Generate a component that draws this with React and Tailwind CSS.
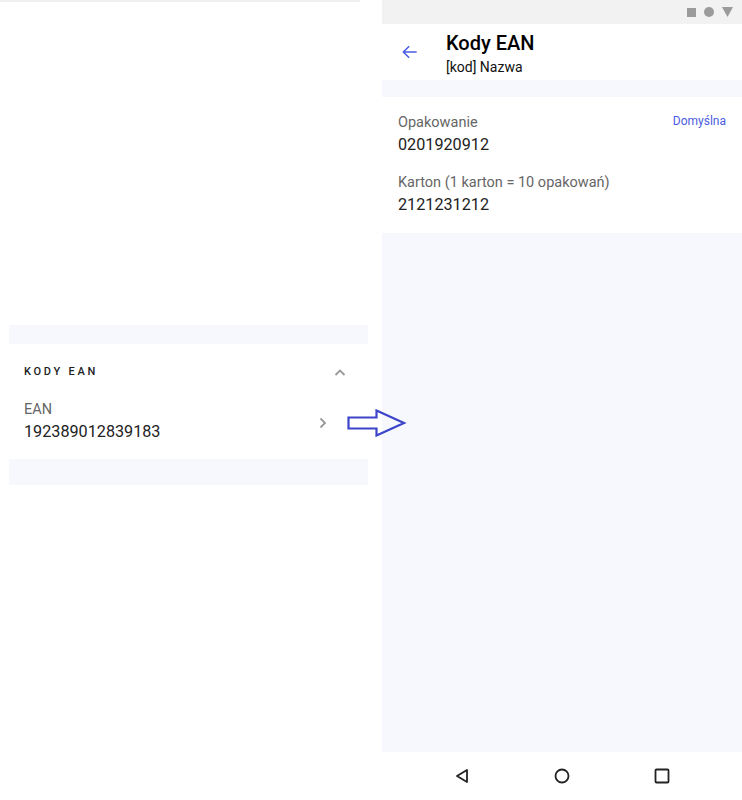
import React from "react";

const font = { fontFamily: "Roboto, 'Liberation Sans', sans-serif" };

const BlockArrow = () => (
  <svg width="60" height="28" viewBox="0 0 60 28" className="absolute left-[347px] top-[409px]">
    <path d="M1.5 8.5 H29.5 V1.5 L57 14 L29.5 26.5 V19.5 H1.5 Z" fill="none" stroke="#3c44c9" strokeWidth="2.2" />
  </svg>
);

const LeftPanel = () => (
  <div className="w-[382px] shrink-0 flex flex-col">
    <div className="h-[2px] w-[360px] bg-[#f0f0f0]" />
    <div className="h-[323px]" />
    <div className="ml-[9px] w-[359px] h-[19px] bg-[#f7f8fd]" />
    <div className="ml-[9px] w-[359px] h-[115px] bg-white flex flex-col">
      <div className="h-[56px] px-[15px] pt-[1px] flex items-center justify-between">
        <span className="text-[11px] font-medium tracking-[0.25em] text-[#222]">KODY EAN</span>
        <svg width="14" height="14" viewBox="0 0 14 14" className="mr-[6px]">
          <path d="M2.5 9 L7 4.5 L11.5 9" fill="none" stroke="#999" strokeWidth="1.8" />
        </svg>
      </div>
      <div className="px-[15px] pt-[1px] flex items-center justify-between">
        <div className="flex flex-col">
          <span className="text-[14.5px] leading-[18px] text-[#666]">EAN</span>
          <span className="text-[16.2px] leading-[22px] text-[#222] mt-[2px]">192389012839183</span>
        </div>
        <svg width="12" height="14" viewBox="0 0 12 14" className="mr-[24px] mt-[2px]">
          <path d="M3.5 2.5 L8 7 L3.5 11.5" fill="none" stroke="#999" strokeWidth="1.8" />
        </svg>
      </div>
    </div>
    <div className="ml-[9px] w-[359px] h-[26px] bg-[#f7f8fd]" />
  </div>
);

const RightPanel = () => (
  <div className="w-[360px] shrink-0 h-[800px] flex flex-col bg-[#f7f8fd]">
    <div className="h-[24px] bg-[#f2f2f2] flex items-center justify-end gap-[8px] pr-[9px]">
      <div className="w-[9px] h-[9px] bg-[#9b9b9b]" />
      <div className="w-[10px] h-[10px] rounded-full bg-[#9b9b9b]" />
      <svg width="11" height="10" viewBox="0 0 11 10">
        <path d="M0 0 H11 L5.5 10 Z" fill="#9b9b9b" />
      </svg>
    </div>
    <div className="h-[56px] bg-white flex items-center">
      <div className="w-[64px] flex items-center pl-[18px]">
        <svg width="20" height="20" viewBox="0 0 24 24">
          <path d="M20 12 H4.5 M11 5 L4 12 L11 19" fill="none" stroke="#4a5be0" strokeWidth="1.8" />
        </svg>
      </div>
      <div className="flex flex-col pt-[3px]">
        <span className="text-[20px] leading-[24px] font-medium text-black">Kody EAN</span>
        <span className="text-[14px] leading-[18px] text-[#111] mt-[3px]">[kod] Nazwa</span>
      </div>
    </div>
    <div className="h-[17px]" />
    <div className="h-[136px] bg-white px-[16px] pt-[17px] flex flex-col">
      <div className="flex justify-between items-start">
        <div className="flex flex-col">
          <span className="text-[14.5px] leading-[18px] text-[#666]">Opakowanie</span>
          <span className="text-[16.2px] leading-[22px] text-[#222] mt-[2px]">0201920912</span>
        </div>
        <span className="text-[12px] leading-[14px] text-[#4a5be0]">Domyślna</span>
      </div>
      <div className="flex flex-col mt-[18px]">
        <span className="text-[14.5px] leading-[18px] text-[#666]">Karton (1 karton = 10 opakowań)</span>
        <span className="text-[16.2px] leading-[22px] text-[#222] mt-[2px]">2121231212</span>
      </div>
    </div>
    <div className="flex-1" />
    <div className="h-[48px] bg-white flex items-center justify-between pl-[72px] pr-[72px]">
      <svg width="16" height="16" viewBox="0 0 16 16">
        <path d="M13 2 L3 8 L13 14 Z" fill="none" stroke="#222" strokeWidth="1.8" strokeLinejoin="round" />
      </svg>
      <svg width="16" height="16" viewBox="0 0 16 16">
        <circle cx="8" cy="8" r="6.5" fill="none" stroke="#222" strokeWidth="1.8" />
      </svg>
      <svg width="16" height="16" viewBox="0 0 16 16">
        <rect x="1.5" y="1.5" width="13" height="13" rx="1" fill="none" stroke="#222" strokeWidth="1.8" />
      </svg>
    </div>
  </div>
);

export default function App() {
  return (
    <div className="relative w-[742px] h-[800px] bg-white flex overflow-hidden" style={font}>
      <LeftPanel />
      <RightPanel />
      <BlockArrow />
    </div>
  );
}
